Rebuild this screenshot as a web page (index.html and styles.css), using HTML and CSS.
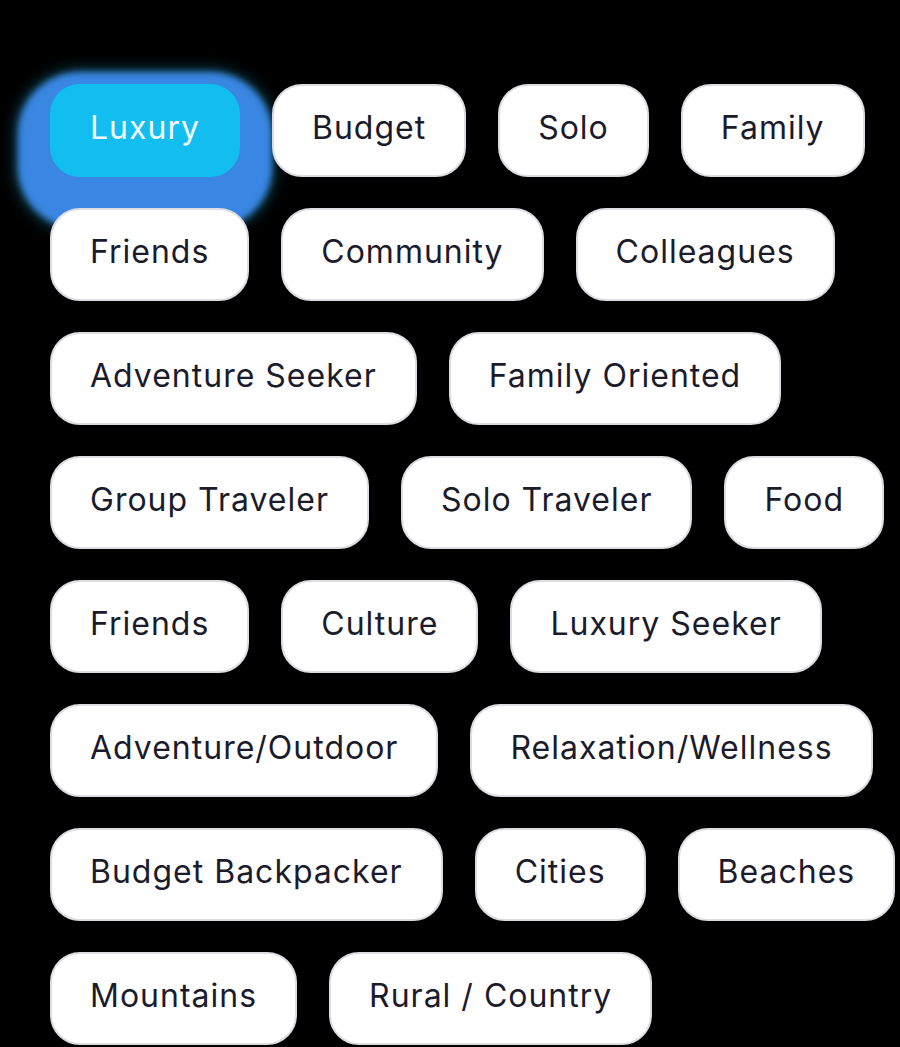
FILE: index.html
```html
<!DOCTYPE html>
<html lang="en">
<head>
<meta charset="utf-8">
<title>Travel tags</title>
<link rel="stylesheet" href="styles.css">
</head>
<body>
<div class="tags">
  <span class="tag tag-active">Luxury</span>
  <span class="tag">Budget</span>
  <span class="tag">Solo</span>
  <span class="tag">Family</span>
  <span class="tag">Friends</span>
  <span class="tag">Community</span>
  <span class="tag">Colleagues</span>
  <span class="tag">Adventure Seeker</span>
  <span class="tag">Family Oriented</span>
  <span class="tag">Group Traveler</span>
  <span class="tag">Solo Traveler</span>
  <span class="tag">Food</span>
  <span class="tag">Friends</span>
  <span class="tag">Culture</span>
  <span class="tag">Luxury Seeker</span>
  <span class="tag">Adventure/Outdoor</span>
  <span class="tag">Relaxation/Wellness</span>
  <span class="tag">Budget Backpacker</span>
  <span class="tag">Cities</span>
  <span class="tag">Beaches</span>
  <span class="tag">Mountains</span>
  <span class="tag">Rural / Country</span>
</div>
</body>
</html>
```

FILE: styles.css
```css
html, body {
  margin: 0;
  padding: 0;
  background: #000;
}
body {
  width: 900px;
  height: 1047px;
  overflow: hidden;
  font-family: "Inter", "Lato", sans-serif;
}
.tags {
  display: flex;
  flex-wrap: wrap;
  gap: 31px 32px;
  padding: 84px 0 0 50px;
  width: 850px;
}
.tag {
  box-sizing: border-box;
  height: 93px;
  display: inline-flex;
  align-items: center;
  padding: 0 38px 6px;
  background: #fff;
  border: 2px solid #dcdce2;
  border-radius: 30px;
  color: #1b1b2b;
  font-size: 32px;
  font-weight: 400;
  letter-spacing: 1px;
  white-space: nowrap;
}
.tag-active {
  background: #12bdf0;
  border-color: #12bdf0;
  color: #f2fbff;
  box-shadow: 0 20px 6px 32px rgba(62, 142, 240, 0.92), 0 20px 14px 36px rgba(40, 190, 240, 0.3);
}
```
